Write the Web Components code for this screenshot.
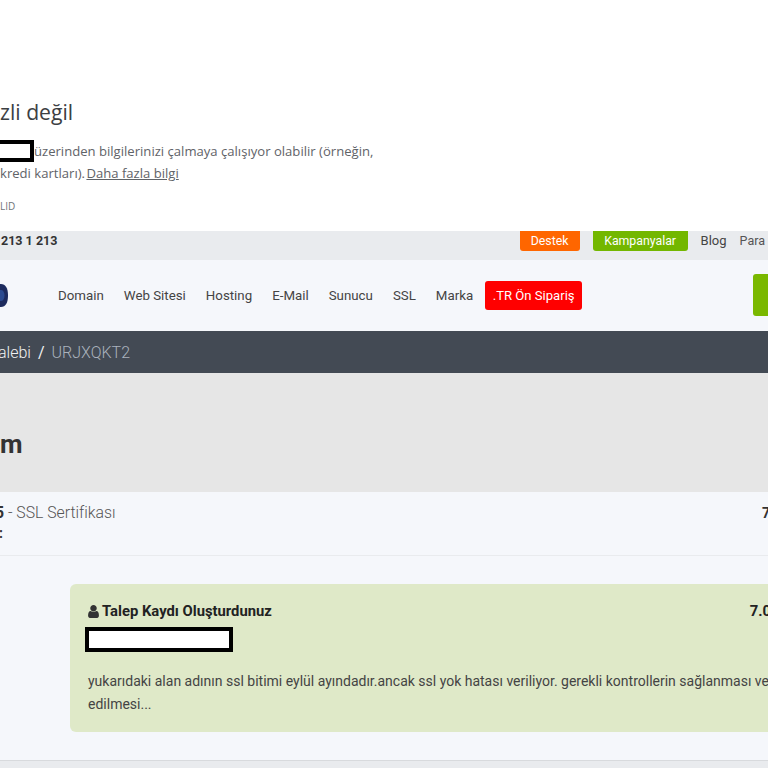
<!DOCTYPE html>
<html lang="tr">
<head>
<meta charset="utf-8">
<title>Talep</title>
<style>
  html, body { margin: 0; height: 768px; overflow: hidden; background: #e9ebee; }
  body { font-family: Roboto, "Liberation Sans", sans-serif; }
</style>
</head>
<body>
<ssl-warning>
  <span slot="title">zli değil</span>
  <span slot="first">üzerinden bilgilerinizi çalmaya çalışıyor olabilir (örneğin,</span>
  <span slot="second">kredi kartları).</span>
  <span slot="code">LID</span>
</ssl-warning>
<top-bar></top-bar>
<main-nav></main-nav>
<crumb-bar></crumb-bar>
<page-hero>m</page-hero>
<ticket-head></ticket-head>
<ticket-reply>
  <span slot="author">Talep Kaydı Oluşturdunuz</span>
  <span slot="date">7.0</span>
  yukarıdaki alan adının ssl bitimi eylül ayındadır.ancak ssl yok hatası veriliyor. gerekli kontrollerin sağlanması ve edilmesi...
</ticket-reply>

<script>
const warningTemplate = `
  <style>
    :host{
      display:block;
      height:231px;
      box-sizing:border-box;
      padding-top:98px;
      background:#fff;
      font-family:"Open Sans","Noto Sans",sans-serif;
      color:#5f6368;
    }
    h1{
      margin:0;
      font-size:21.200px;
      line-height:28px;
      font-weight:400;
      color:#3c4043;
    }
    p{
      margin:0;
      font-size:13.100px;
      line-height:22px;
      white-space:nowrap;
    }
    #first{
      margin-top:14px;
      display:flex;
      align-items:center;
    }
    #mask{
      width:30px;
      height:14px;
      border:solid #000;
      border-width:4px 4px 4px 0;
      background:#fff;
      margin-top:-1px;
    }
    a{
      color:inherit;
      text-decoration:underline;
      margin-left:-2px;
    }
    #code{
      margin-top:15px;
      font-size:10px;
      line-height:14px;
      color:#70757a;
    }
  </style>
  <h1><slot name="title"></slot></h1>
  <p id="first"><span id="mask"></span><slot name="first"></slot></p>
  <p><slot name="second"></slot> <a href="#">Daha fazla bilgi</a></p>
  <div id="code"><slot name="code"></slot></div>
`;

class SslWarning extends HTMLElement {
  constructor() {
    super();
    this.attachShadow({ mode: 'open' });
    this.shadowRoot.innerHTML = warningTemplate;
  }
}

const topBarTemplate = `
  <style>
    :host{
      display:flex;
      align-items:flex-start;
      height:29px;
      background:#e9ebee;
      font-size:13px;
      color:#333;
      overflow:hidden;
    }
    #phone{
      font-weight:700;
      font-size:12.500px;
      line-height:19px;
      margin-left:1px;
      flex:1;
    }
    .btn{
      height:20px;
      line-height:20px;
      color:#fff;
      font-size:12.300px;
      text-align:center;
      border-radius:0 0 3px 3px;
    }
    #help{
      width:60px;
      background:#ff6600;
    }
    #deals{
      width:95px;
      margin-left:13px;
      background:#73b700;
    }
    #blog{
      margin-left:13px;
      line-height:19px;
      color:#444;
    }
    #para{
      margin-left:13px;
      margin-right:3px;
      line-height:19px;
      font-size:12.500px;
      color:#555;
    }
  </style>
  <div id="phone">213 1 213</div>
  <div class="btn" id="help">Destek</div>
  <div class="btn" id="deals">Kampanyalar</div>
  <div id="blog">Blog</div>
  <div id="para">Para</div>
`;

class TopBar extends HTMLElement {
  constructor() {
    super();
    this.attachShadow({ mode: 'open' });
    this.shadowRoot.innerHTML = topBarTemplate;
  }
}

const navTemplate = `
  <style>
    :host{
      display:flex;
      align-items:center;
      height:71px;
      background:#f5f7fb;
      font-size:13.300px;
      color:#444;
      overflow:hidden;
    }
    #logo{
      width:8px;
      height:23px;
      margin-right:50px;
    }
    #links{
      display:flex;
      align-items:center;
      gap:20px;
      flex:1;
    }
    #pre{
      margin-left:-8px;
      width:97px;
      height:29px;
      line-height:29px;
      text-align:center;
      font-size:13.100px;
      background:#ff0000;
      color:#fff;
      border-radius:3px;
    }
    #cta{
      width:15px;
      height:42px;
      background:#7ab800;
      border-radius:3px 0 0 3px;
      margin-top:-1px;
    }
  </style>
  <svg id="logo" viewBox="0 0 8 23"><path fill="#1d2b5e" d="M0 0h1c4.500 0 7 4 7 11.500S5.500 23 1 23H0z"/><path fill="#2b4a8f" d="M0 6h1c2 0 3.500 2 3.500 5.500S3 17 1 17H0z"/></svg>
  <div id="links">
    <span>Domain</span>
    <span>Web Sitesi</span>
    <span>Hosting</span>
    <span>E-Mail</span>
    <span>Sunucu</span>
    <span>SSL</span>
    <span>Marka</span>
    <span id="pre">.TR Ön Sipariş</span>
  </div>
  <div id="cta"></div>
`;

class MainNav extends HTMLElement {
  constructor() {
    super();
    this.attachShadow({ mode: 'open' });
    this.shadowRoot.innerHTML = navTemplate;
  }
}

const crumbTemplate = `
  <style>
    :host{
      display:flex;
      align-items:center;
      height:42px;
      background:#434a54;
      color:#f2f2f2;
      font-size:16px;
      font-weight:300;
    }
    #prev{
      margin-left:-2px;
    }
    #sep{
      margin:0 7px;
      font-weight:400;
    }
    #current{
      color:#aab2bd;
    }
  </style>
  <span id="prev">alebi</span><span id="sep">/</span><span id="current">URJXQKT2</span>
`;

class CrumbBar extends HTMLElement {
  constructor() {
    super();
    this.attachShadow({ mode: 'open' });
    this.shadowRoot.innerHTML = crumbTemplate;
  }
}

const heroTemplate = `
  <style>
    :host{
      display:block;
      height:119px;
      box-sizing:border-box;
      padding-top:55px;
      background:#e6e6e6;
      color:#333;
      font-size:26px;
      line-height:32px;
      font-weight:700;
    }
  </style>
  <slot></slot>
`;

class PageHero extends HTMLElement {
  constructor() {
    super();
    this.attachShadow({ mode: 'open' });
    this.shadowRoot.innerHTML = heroTemplate;
  }
}

const ticketHeadTemplate = `
  <style>
    :host{
      display:flex;
      justify-content:space-between;
      height:64px;
      box-sizing:border-box;
      padding-top:11px;
      background:#f5f7fb;
      border-bottom:1px solid #e9ebee;
      color:#555;
      font-size:15.800px;
      line-height:20px;
      font-weight:300;
      overflow:hidden;
    }
    b{
      font-weight:700;
      color:#333;
    }
    #num{
      margin-left:-5px;
    }
    #row2{
      margin-left:-1px;
      font-size:14px;
      font-weight:700;
      color:#333;
    }
    #date{
      font-size:14px;
      margin-right:-6px;
    }
  </style>
  <div>
    <div><b id="num">5</b> - SSL Sertifikası</div>
    <div id="row2">:</div>
  </div>
  <b id="date">7.</b>
`;

class TicketHead extends HTMLElement {
  constructor() {
    super();
    this.attachShadow({ mode: 'open' });
    this.shadowRoot.innerHTML = ticketHeadTemplate;
  }
}

const replyTemplate = `
  <style>
    :host{
      display:block;
      height:205px;
      box-sizing:border-box;
      padding:28px 0 0 70px;
      background:#f5f7fb;
      border-bottom:1px solid #d8dadd;
      overflow:hidden;
    }
    #card{
      width:760px;
      height:148px;
      box-sizing:border-box;
      padding:17px 0 0 18px;
      background:#dfe9c8;
      border-radius:6px 0 0 6px;
      color:#444;
      font-size:14px;
    }
    #head{
      display:flex;
      justify-content:space-between;
      width:683px;
      font-size:14.800px;
      font-weight:700;
      color:#222;
      line-height:20px;
    }
    #who{
      display:flex;
      align-items:center;
      gap:3px;
    }
    svg{
      width:11px;
      height:13px;
      fill:#333;
    }
    #mask{
      width:140px;
      height:17px;
      margin:6px 0 0 -3px;
      border:4px solid #000;
      background:#fff;
    }
    #text{
      width:712px;
      margin-top:18px;
      line-height:22.500px;
    }
  </style>
  <div id="card">
    <div id="head">
      <span id="who">
        <svg viewBox="256 128 1280 1536"><path d="M1536 1399q0 109-62.500 187t-150.500 78h-854q-88 0-150.500-78t-62.500-187q0-85 8.500-160.500t31.500-152 58.500-131 94-89 134.500-34.500q131 128 313 128t313-128q76 0 134.500 34.500t94 89 58.500 131 31.500 152 8.500 160.500zm-256-887q0 159-112.500 271.500t-271.500 112.500-271.500-112.500-112.500-271.500 112.500-271.500 271.500-112.500 271.500 112.500 112.500 271.500z"/></svg>
        <slot name="author"></slot>
      </span>
      <slot name="date"></slot>
    </div>
    <div id="mask"></div>
    <div id="text"><slot></slot></div>
  </div>
`;

class TicketReply extends HTMLElement {
  constructor() {
    super();
    this.attachShadow({ mode: 'open' });
    this.shadowRoot.innerHTML = replyTemplate;
  }
}

customElements.define('ssl-warning', SslWarning);
customElements.define('top-bar', TopBar);
customElements.define('main-nav', MainNav);
customElements.define('crumb-bar', CrumbBar);
customElements.define('page-hero', PageHero);
customElements.define('ticket-head', TicketHead);
customElements.define('ticket-reply', TicketReply);
</script>
</body>
</html>
